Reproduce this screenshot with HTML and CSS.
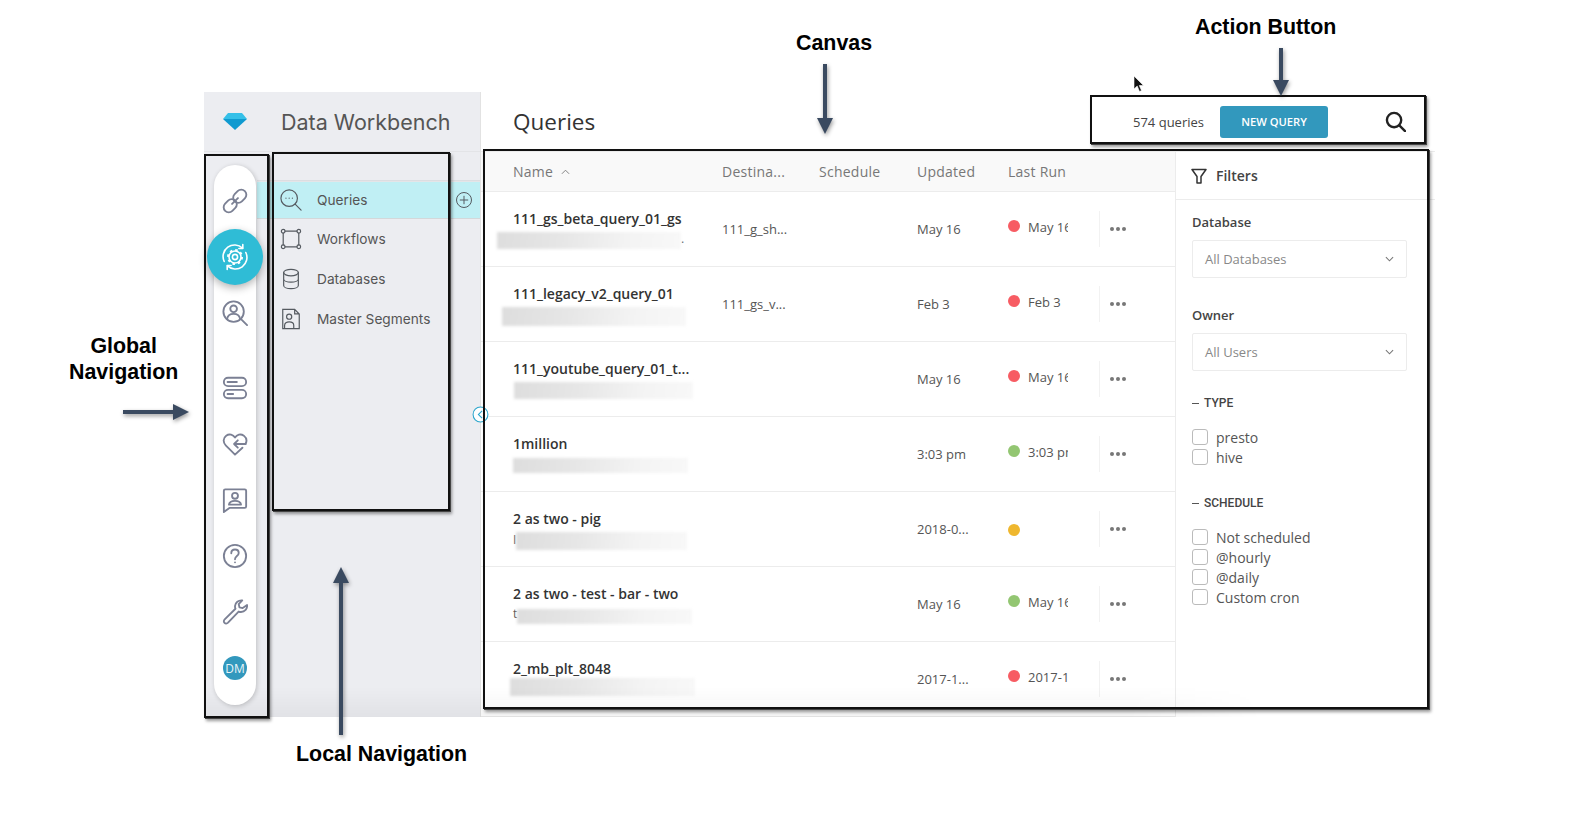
FILE: index.html
```html
<!DOCTYPE html>
<html>
<head>
    <title>Data Workbench</title>
    <link rel="stylesheet" href="styles.css">
</head>
<body>
<div class="page">
    <div class="app">
        <div class="side">
            <div class="brand">
                <svg class="gem" viewBox="0 0 24 17">
                    <polygon points="5,0 19,0 24,6 0,6" fill="#35c0e8"/>
                    <polygon points="0,6 24,6 12,17" fill="#0f9ad0"/>
                </svg>
                <span class="brand-name">Data Workbench</span>
            </div>
            <div class="side-body">
                <div class="pill">
                    <div class="pill-item">
                        <svg class="ico" viewBox="0 0 28 28"><g transform="rotate(-45 14 14)"><rect x="-1" y="8.500" width="15.500" height="11" rx="5.500"/><rect x="13.500" y="8.500" width="15.500" height="11" rx="5.500"/><path d="M9.500 14h9"/></g></svg>
                    </div>
                    <div class="pill-item active">
                        <svg class="ico-gear" viewBox="0 0 28 28">
                            <path d="M3.200 18.500A11.500 11.500 0 0 1 21.500 5.200"/>
                            <path d="M24.800 9.500A11.500 11.500 0 0 1 6.500 22.800"/>
                            <path d="M21.800 1.600v3.900h-3.900M6.200 26.400v-3.900h3.900"/>
                            <circle cx="14" cy="14" r="2.600"/>
                            <circle cx="14" cy="14" r="6"/>
                            <circle class="teeth" cx="14" cy="14" r="7"/>
                        </svg>
                    </div>
                    <div class="pill-item">
                        <svg class="ico" viewBox="0 0 28 28"><circle cx="12.500" cy="12.500" r="11"/><circle cx="12.500" cy="9.500" r="3.600"/><path d="M5.500 20.500c.6-4 3.400-5.600 7-5.600s6.400 1.600 7 5.600M20.500 20.500l6.500 6.500"/></svg>
                    </div>
                    <div class="pill-item gap">
                        <svg class="ico" viewBox="0 0 28 28"><rect x="2" y="3" width="24" height="9" rx="4.500"/><rect x="2" y="16" width="24" height="9" rx="4.500"/><path d="M6 7.500h10M6 20.500h6"/></svg>
                    </div>
                    <div class="pill-item">
                        <svg class="ico" viewBox="0 0 28 28"><path d="M22 18 14 25.500 4 15.500C1 12.500 1 7.500 4.500 5 8 2.500 12 4 14 7c2-3 6-4.500 9.500-2 2.500 2 3.500 5.500 2 8.500"/><path d="M25.500 14H13M17 10l-4 4 4 4"/></svg>
                    </div>
                    <div class="pill-item">
                        <svg class="ico" viewBox="0 0 28 28"><path d="M3.500 2.500h21a1.500 1.500 0 0 1 1.500 1.500v17a1.500 1.500 0 0 1-1.500 1.500H8L2 27V4a1.500 1.500 0 0 1 1.500-1.500z"/><circle cx="14" cy="9.500" r="3.200"/><path d="M7.500 19c.4-3 3-4 6.500-4s6.100 1 6.500 4z"/></svg>
                    </div>
                    <div class="pill-item">
                        <svg class="ico" viewBox="0 0 28 28"><circle cx="14" cy="14" r="12"/><path d="M10 11c0-2.500 1.800-4 4-4s4 1.500 4 3.700c0 3.300-4 3.300-4 6.800"/><circle class="solid" cx="14" cy="20.800" r="1"/></svg>
                    </div>
                    <div class="pill-item">
                        <svg class="ico" viewBox="0 0 28 28"><path d="M27 6.500c.5 4-2.500 7.500-6.500 7.500-1 0-1.800-.2-2.600-.5L6.500 25.500c-1.200 1.200-2.800 1.200-3.800.2s-1-2.600.2-3.800L14.500 10.500c-.4-.9-.5-1.800-.5-2.800C14.200 3.800 17.800 1 21.800 1.500l-3.800 4 .8 3.500 3.500.8z"/></svg>
                    </div>
                    <div class="pill-item"><span class="avatar">DM</span></div>
                </div>
                <div class="menu">
                    <div class="menu-item current">
                        <svg class="ico-sm" viewBox="0 0 24 24"><circle cx="10" cy="10" r="9"/><path d="M16.500 16.500 23 23"/><path class="dots" d="M6.500 10h.01M10 10h.01M13.500 10h.01"/></svg>
                        <span>Queries</span>
                        <svg class="plus" viewBox="0 0 18 18"><circle cx="9" cy="9" r="7.500"/><path d="M9 4.800v8.400M4.800 9h8.400"/></svg>
                    </div>
                    <div class="menu-item">
                        <svg class="ico-sm" viewBox="0 0 24 24"><circle cx="3.500" cy="3.500" r="2"/><circle cx="20.500" cy="3.500" r="2"/><circle cx="3.500" cy="20.500" r="2"/><circle cx="20.500" cy="20.500" r="2"/><path d="M5.500 3.500h13M3.500 5.500v13M20.500 5.500v13M5.500 20.500h13"/></svg>
                        <span>Workflows</span>
                    </div>
                    <div class="menu-item">
                        <svg class="ico-sm" viewBox="0 0 24 24"><ellipse cx="12" cy="5" rx="8" ry="3.500"/><path d="M4 5v14c0 2 3.600 3.500 8 3.500s8-1.500 8-3.500V5M4 12c0 2 3.600 3.500 8 3.500s8-1.500 8-3.500"/></svg>
                        <span>Databases</span>
                    </div>
                    <div class="menu-item">
                        <svg class="ico-sm" viewBox="0 0 24 24"><path d="M3 1.500h13l5 5v16H3zM16 1.500v5h5"/><circle cx="10" cy="9.500" r="2.800"/><path d="M5 21.500v-2.500c0-2.500 2.200-3.800 5-3.800s5 1.300 5 3.800v2.500"/></svg>
                        <span>Master Segments</span>
                    </div>
                </div>
            </div>
        </div>

        <div class="main">
            <div class="topbar">
                <h1>Queries</h1>
                <span class="count">574 queries</span>
                <button class="new-btn">NEW QUERY</button>
                <svg class="search" viewBox="0 0 22 22"><circle cx="9.500" cy="9.500" r="7.500"/><path d="M15 15l6 6"/></svg>
            </div>
            <div class="content">
                <div class="table">
                    <div class="row head">
                        <div class="name-head">Name <svg class="sort" viewBox="0 0 10 6"><path d="M1 5l4-4 4 4"/></svg></div>
                        <div>Destina...</div>
                        <div>Schedule</div>
                        <div>Updated</div>
                        <div>Last Run</div>
                    </div>

                    <div class="row">
                        <div class="name">111_gs_beta_query_01_gs<div class="sub"><i class="smudge s1"></i><span>.</span></div></div>
                        <div>111_g_sh...</div>
                        <div></div>
                        <div>May 16</div>
                        <div class="run"><i class="dot red"></i><span>May 16</span></div>
                        <div class="more"><i></i><i></i><i></i></div>
                    </div>
                    <div class="row">
                        <div class="name">111_legacy_v2_query_01<div class="sub"><i class="smudge s2"></i></div></div>
                        <div>111_gs_v...</div>
                        <div></div>
                        <div>Feb 3</div>
                        <div class="run"><i class="dot red"></i><span>Feb 3</span></div>
                        <div class="more"><i></i><i></i><i></i></div>
                    </div>
                    <div class="row">
                        <div class="name">111_youtube_query_01_t...<div class="sub"><i class="smudge s3"></i></div></div>
                        <div></div>
                        <div></div>
                        <div>May 16</div>
                        <div class="run"><i class="dot red"></i><span>May 16</span></div>
                        <div class="more"><i></i><i></i><i></i></div>
                    </div>
                    <div class="row">
                        <div class="name">1million<div class="sub"><i class="smudge s4"></i></div></div>
                        <div></div>
                        <div></div>
                        <div>3:03 pm</div>
                        <div class="run"><i class="dot green"></i><span>3:03 pm</span></div>
                        <div class="more"><i></i><i></i><i></i></div>
                    </div>
                    <div class="row">
                        <div class="name">2 as two - pig<div class="sub"><span>I</span><i class="smudge s5"></i></div></div>
                        <div></div>
                        <div></div>
                        <div>2018-0...</div>
                        <div class="run no-date"><i class="dot yellow"></i></div>
                        <div class="more"><i></i><i></i><i></i></div>
                    </div>
                    <div class="row">
                        <div class="name">2 as two - test - bar - two<div class="sub"><span>t</span><i class="smudge s6"></i></div></div>
                        <div></div>
                        <div></div>
                        <div>May 16</div>
                        <div class="run"><i class="dot green"></i><span>May 16</span></div>
                        <div class="more"><i></i><i></i><i></i></div>
                    </div>
                    <div class="row">
                        <div class="name">2_mb_plt_8048<div class="sub"><i class="smudge s7"></i></div></div>
                        <div></div>
                        <div></div>
                        <div>2017-1...</div>
                        <div class="run"><i class="dot red"></i><span>2017-11</span></div>
                        <div class="more"><i></i><i></i><i></i></div>
                    </div>
                </div>

                <div class="filters">
                    <div class="filters-head">
                        <svg class="funnel" viewBox="0 0 16 16"><path d="M1 1.500h14L10 8.500V15H6V8.500z"/></svg>
                        <span>Filters</span>
                    </div>
                    <div class="filters-body">
                        <label class="field-label">Database</label>
                        <div class="select">All Databases <svg viewBox="0 0 10 6"><path d="M1 1l4 4 4-4"/></svg></div>
                        <label class="field-label">Owner</label>
                        <div class="select">All Users <svg viewBox="0 0 10 6"><path d="M1 1l4 4 4-4"/></svg></div>

                        <div class="group-title">TYPE</div>
                        <div class="check"><i></i>presto</div>
                        <div class="check"><i></i>hive</div>

                        <div class="group-title">SCHEDULE</div>
                        <div class="check"><i></i>Not scheduled</div>
                        <div class="check"><i></i>@hourly</div>
                        <div class="check"><i></i>@daily</div>
                        <div class="check"><i></i>Custom cron</div>
                    </div>
                </div>
            </div>
        </div>

        <svg class="collapse" viewBox="0 0 16 16"><circle cx="8" cy="8" r="7"/><path d="M9.500 4.500 6 8l3.500 3.500"/></svg>
    </div>

    <!-- annotations laid over the screenshot -->
    <div class="box box-global"></div>
    <div class="box box-local"></div>
    <div class="box box-canvas"></div>
    <div class="box box-action"></div>

    <div class="note note-canvas">Canvas</div>
    <div class="note note-action">Action Button</div>
    <div class="note note-global">Global<br>Navigation</div>
    <div class="note note-local">Local Navigation</div>

    <svg class="arrow arrow-canvas" viewBox="0 0 18 70"><path d="M9 0v56" /><polygon points="1,54 17,54 9,70"/></svg>
    <svg class="arrow arrow-action" viewBox="0 0 18 48"><path d="M9 0v34"/><polygon points="1,32 17,32 9,48"/></svg>
    <svg class="arrow arrow-global" viewBox="0 0 66 18"><path d="M0 9h52"/><polygon points="50,1 50,17 66,9"/></svg>
    <svg class="arrow arrow-local" viewBox="0 0 18 168"><path d="M9 168V14"/><polygon points="1,16 17,16 9,0"/></svg>
    <svg class="cursor" viewBox="0 0 12 18"><polygon points="1,1 1,14 4.200,11 6.500,16.500 8.500,15.500 6.300,10.500 10.500,10.500"/></svg>
</div>
</body>
</html>
```

FILE: styles.css
```css
* {
    box-sizing: border-box;
}

body {
    margin: 0;
    background-color: #fff;
    font-family: "Open Sans", sans-serif;
    color: #444;
}

.page {
    position: relative;
    width: 1572px;
    height: 813px;
    overflow: hidden;
}

.app {
    position: relative;
    display: flex;
    width: 1231px;
    height: 625px;
    margin: 92px 0 0 204px;
}

/* soft fade at the bottom of the shot */
.app::after {
    content: "";
    position: absolute;
    left: 0;
    right: 0;
    bottom: 0;
    height: 30px;
    background: linear-gradient(rgba(0, 0, 0, 0), rgba(0, 0, 0, 0.045));
    -webkit-mask-image: linear-gradient(90deg, #000 75%, transparent 86%);
    pointer-events: none;
}

/* sidebar */
.side {
    width: 277px;
    background-color: #ecedf1;
    border-right: 1px solid #e2e2e2;
}

.brand {
    display: flex;
    align-items: center;
    height: 60px;
    padding-left: 19px;
    border-bottom: 1px solid #e3e4e7;
}

.gem {
    width: 24px;
    height: 17px;
}

.brand-name {
    margin-left: 34px;
    font-family: "Inter", sans-serif;
    font-size: 21.500px;
    font-weight: 400;
    color: #555;
}

.side-body {
    display: flex;
    align-items: flex-start;
}

.pill {
    display: flex;
    flex-direction: column;
    align-items: center;
    width: 42px;
    height: 540px;
    margin: 13px 0 0 10px;
    padding-top: 8px;
    background-color: #fff;
    border-radius: 21px;
    box-shadow: 1px 1px 5px rgba(0, 0, 0, 0.2);
    position: relative;
    z-index: 1;
}

.pill-item {
    display: flex;
    flex: none;
    align-items: center;
    justify-content: center;
    width: 56px;
    height: 56px;
}

.pill-item.gap {
    margin-top: 19px;
}

.pill-item.active {
    background-color: #2fbcd6;
    border-radius: 50%;
    box-shadow: 0 3px 8px rgba(0, 0, 0, 0.3);
}

.ico {
    width: 26px;
    height: 26px;
    fill: none;
    stroke: #7b8094;
    stroke-width: 2;
    stroke-linecap: round;
    stroke-linejoin: round;
}

.ico .solid {
    fill: #7b8094;
    stroke: none;
}

.ico-gear {
    width: 28px;
    height: 28px;
    fill: none;
    stroke: #fff;
    stroke-width: 1.600;
    stroke-linecap: round;
    stroke-linejoin: round;
}

.ico-gear .teeth {
    stroke-width: 2;
    stroke-dasharray: 2.500 3;
    stroke-linecap: butt;
}

.avatar {
    display: flex;
    align-items: center;
    justify-content: center;
    width: 24px;
    height: 24px;
    background-color: #3298bd;
    border-radius: 50%;
    color: #e8f4f8;
    font-size: 12px;
}

.menu {
    flex: 1;
    margin-top: 28px;
    border-top: 1px solid #dcdde1;
    margin-left: 1px;
}

.menu-item {
    display: flex;
    align-items: center;
    height: 40px;
    padding-left: 23px;
    font-family: "Inter", sans-serif;
    font-size: 13.700px;
    color: #555;
}

.menu-item span {
    margin-left: 15px;
}

.menu-item.current {
    height: 38px;
    background-color: #c0eff4;
    border-top: 1px solid #e4e5e8;
    border-bottom: 1px solid #d3d8da;
}

.ico-sm {
    flex: none;
    width: 22px;
    height: 22px;
    fill: none;
    stroke: #555a60;
    stroke-width: 1.300;
    stroke-linecap: round;
}

.plus {
    width: 18px;
    height: 18px;
    margin-left: auto;
    margin-right: 7px;
    fill: none;
    stroke: #555a60;
    stroke-width: 1;
}

.collapse {
    position: absolute;
    left: 268px;
    top: 314px;
    width: 17px;
    height: 17px;
    fill: #fff;
    stroke: #2aa5cc;
    stroke-width: 1;
    z-index: 2;
}

/* main area */
.main {
    flex: 1;
    display: flex;
    flex-direction: column;
    min-width: 0;
}

.topbar {
    display: flex;
    align-items: center;
    height: 60px;
    padding-left: 32px;
    border-bottom: 1px solid #ececec;
}

.topbar h1 {
    margin: 0;
    font-size: 22.500px;
    font-weight: 400;
    color: #333;
}

.count {
    margin-left: auto;
    font-size: 13px;
    color: #444;
}

.new-btn {
    width: 108px;
    height: 32px;
    margin-left: 16px;
    background-color: #3298bd;
    border: none;
    border-radius: 3px;
    color: #fff;
    font-family: "Open Sans", sans-serif;
    font-size: 11.200px;
    font-weight: 600;
}

.search {
    width: 21px;
    height: 21px;
    margin: 0 29px 0 57px;
    fill: none;
    stroke: #222;
    stroke-width: 2.500;
    stroke-linecap: round;
}

.content {
    flex: 1;
    display: flex;
    min-height: 0;
}

/* table */
.table {
    width: 694px;
    overflow: hidden;
}

.row {
    display: grid;
    grid-template-columns: 209px 97px 98px 91px 91px 1fr;
    align-items: center;
    height: 75px;
    padding-left: 32px;
    border-bottom: 1px solid #ececec;
    font-size: 13px;
    color: #555;
}

.row.head {
    height: 40px;
    background-color: #f9f9f9;
    font-size: 14px;
    font-weight: 500;
    letter-spacing: 0.250px;
    color: #777;
}

.name-head {
    display: flex;
    align-items: center;
}

.sort {
    width: 9px;
    height: 6px;
    margin-left: 8px;
    fill: none;
    stroke: #777;
    stroke-width: 1;
}

.name {
    align-self: start;
    padding-top: 17px;
    font-size: 14px;
    line-height: 20px;
    font-weight: 600;
    color: #333;
    white-space: nowrap;
}

.sub {
    display: flex;
    align-items: center;
    font-weight: 400;
    font-size: 12px;
    color: #555;
}

.smudge {
    display: block;
    flex: none;
    background: linear-gradient(100deg, #dddddd 0%, #e6e6e6 35%, #f3f3f3 70%, #f8f8f8 100%);
    filter: blur(1.500px);
}

.s1 { width: 184px; height: 17px; margin: 3px 0 0 -16px; }
.s2 { width: 184px; height: 19px; margin: 3px 0 0 -11px; }
.s3 { width: 179px; height: 17px; margin: 3px 0 0 1px; }
.s4 { width: 175px; height: 15px; margin: 4px 0 0 0; }
.s5 { width: 171px; height: 18px; margin: 3px 0 0 0; }
.s6 { width: 175px; height: 15px; margin: 5px 0 0 0; }
.s7 { width: 185px; height: 18px; margin: -1px 0 0 -3px; }

.run {
    display: flex;
    align-items: center;
    margin-top: -5px;
}

.run.no-date {
    margin-top: 2px;
}

.run span {
    width: 40px;
    margin-left: 8px;
    overflow: hidden;
    white-space: nowrap;
}

.dot {
    flex: none;
    width: 12px;
    height: 12px;
    margin-top: -1px;
    border-radius: 50%;
}

.dot.red { background-color: #f75c63; }
.dot.green { background-color: #93c672; }
.dot.yellow { background-color: #efb72e; }

.more {
    display: flex;
    gap: 2px;
    align-items: center;
    height: 36px;
    padding-left: 10px;
    border-left: 1px solid #f2f2f2;
}

.more i {
    width: 4px;
    height: 4px;
    background-color: #777;
    border-radius: 50%;
}

/* filters */
.filters {
    flex: 1;
    border-left: 1px solid #ececec;
    font-size: 14px;
}

.filters-head {
    display: flex;
    align-items: center;
    height: 48px;
    padding-left: 15px;
    border-bottom: 1px solid #ececec;
    color: #444;
    font-weight: 600;
}

.funnel {
    width: 16px;
    height: 16px;
    margin-right: 9px;
    fill: none;
    stroke: #333;
    stroke-width: 1.500;
    stroke-linejoin: round;
}

.filters-body {
    padding: 12px 27px 0 16px;
}

.field-label {
    display: block;
    height: 20px;
    line-height: 20px;
    font-size: 13px;
    font-weight: 600;
    color: #444;
}

.select {
    display: flex;
    align-items: center;
    height: 38px;
    margin: 8px 0 27px;
    padding: 0 12px;
    width: 215px;
    border: 1px solid #ececec;
    border-radius: 2px;
    color: #888;
    font-size: 13px;
}

.select svg {
    width: 9px;
    height: 6px;
    margin-left: auto;
    fill: none;
    stroke: #777;
    stroke-width: 1.200;
}

.group-title {
    display: flex;
    align-items: center;
    height: 20px;
    margin: 0 0 14px;
    font-family: "Roboto", sans-serif;
    font-size: 12px;
    font-weight: 500;
    color: #444;
}

.group-title::before {
    content: "";
    width: 7px;
    height: 1px;
    margin-right: 5px;
    background-color: #555;
}

.check + .group-title {
    margin-top: 26px;
}

.select + .group-title {
    margin-top: -5px;
}

.check {
    display: flex;
    align-items: center;
    height: 20px;
    color: #555;
}

.check i {
    width: 16px;
    height: 16px;
    margin-right: 8px;
    border: 1px solid #bbb;
    border-radius: 3px;
}

/* annotations */
.box {
    position: absolute;
    border: 2px solid #111;
    box-shadow: 1px 1px 0 #444, 2px 3px 3px rgba(0, 0, 0, 0.4);
    z-index: 3;
}

.box-global { left: 204px; top: 154px; width: 65px; height: 564px; }
.box-local { left: 272px; top: 152px; width: 178px; height: 359px; }
.box-canvas { left: 483px; top: 149px; width: 946px; height: 560px; }
.box-action { left: 1090px; top: 95px; width: 336px; height: 49px; }

.note {
    position: absolute;
    font-family: "Liberation Sans", Arial, sans-serif;
    font-size: 21.400px;
    font-weight: 700;
    line-height: 26px;
    color: #000;
    text-align: center;
    white-space: nowrap;
    z-index: 4;
}

.note-canvas { left: 796px; top: 30px; }
.note-action { left: 1195px; top: 14px; }
.note-global { left: 69px; top: 333px; }
.note-local { left: 296px; top: 741px; }

.arrow {
    position: absolute;
    fill: #3a4a60;
    stroke: #3a4a60;
    stroke-width: 4;
    filter: drop-shadow(1px 2px 2px rgba(0, 0, 0, 0.4));
    z-index: 4;
}

.arrow polygon {
    stroke: none;
}

.arrow-canvas { left: 816px; top: 64px; width: 18px; height: 70px; }
.arrow-action { left: 1272px; top: 48px; width: 18px; height: 48px; }
.arrow-global { left: 123px; top: 403px; width: 66px; height: 18px; }
.arrow-local { left: 332px; top: 567px; width: 18px; height: 168px; }

.cursor {
    position: absolute;
    left: 1133px;
    top: 75px;
    width: 12px;
    height: 18px;
    fill: #111;
    stroke: #fff;
    stroke-width: 0.600;
    z-index: 4;
}
```
